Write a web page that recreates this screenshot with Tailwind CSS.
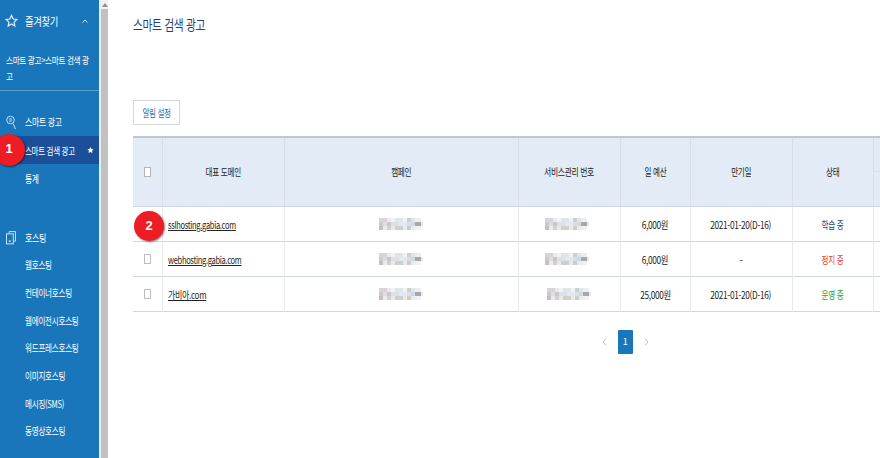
<!DOCTYPE html>
<html lang="ko">
  <head>
    <meta charset="UTF-8">
    <title>스마트 검색 광고</title>
    <script src="https://cdn.jsdelivr.net/npm/@tailwindcss/browser@4"></script>
  </head>
  <body class="bg-white overflow-hidden font-['Noto_Sans_CJK_KR','Noto_Sans',sans-serif]">
    <!-- mosaic used for the blurred values -->
    <svg class="hidden">
      <symbol id="mosaic" viewBox="0 0 44 12" shape-rendering="crispEdges">
        <path fill="#d9d4da" d="M0 0h8v4H0z"/><path fill="#ece9ea" d="M8 0h4v4H8z"/><path fill="#f2f2f0" d="M12 0h4v4h-4z"/><path fill="#dfe6ea" d="M16 0h8v4h-8z"/><path fill="#f1f1f0" d="M24 0h4v4h-4z"/><path fill="#cfcdcf" d="M28 0h4v4h-4z"/><path fill="#dfe5ea" d="M32 0h4v4h-4z"/><path fill="#ebedf0" d="M36 0h6v4h-6z"/>
        <path fill="#cfc8cf" d="M0 4h4v4H0z"/><path fill="#e0dde2" d="M4 4h4v4H4z"/><path fill="#c8c8cc" d="M8 4h4v4H8z"/><path fill="#dfe0e4" d="M12 4h8v4h-8z"/><path fill="#e4e8f2" d="M20 4h8v4h-8z"/><path fill="#d9dfe6" d="M28 4h4v4h-4z"/><path fill="#cdd8e0" d="M32 4h4v4h-4z"/><path fill="#a9a7ab" d="M36 4h6v4h-6z"/><path fill="#e8e8ee" d="M42 4h2v4h-2z"/>
        <path fill="#c4c0c2" d="M0 8h4v4H0z"/><path fill="#eceaea" d="M4 8h4v4H4z"/><path fill="#d4d0cc" d="M8 8h4v4H8z"/><path fill="#e6ebe8" d="M12 8h4v4h-4z"/><path fill="#cfcfcd" d="M16 8h8v4h-8z"/><path fill="#ece8e6" d="M24 8h4v4h-4z"/><path fill="#cdccc8" d="M28 8h4v4h-4z"/><path fill="#e6ecef" d="M32 8h4v4h-4z"/><path fill="#f2f0f4" d="M36 8h6v4h-6z"/>
      </symbol>
    </svg>
    <div class="relative flex w-[880px] h-[458px] overflow-hidden">
      <!-- sidebar -->
      <nav class="w-[99px] h-full shrink-0 bg-[#1a76bb] text-white text-[10px] tracking-[-0.4px]">
        <div class="flex items-center h-[42px] pl-[5px] pr-[11px]">
          <svg class="w-[13px] h-[14px] shrink-0" viewBox="0 0 14 15" fill="none" stroke="#e4eff8" stroke-width="1.3"><path d="M7 1.5l1.8 3.9 4 .5-3 2.8.8 4.2L7 10.8l-3.6 2.1.8-4.2-3-2.8 4-.5z"/></svg>
          <span class="ml-[7px] text-[11px] origin-left scale-x-[.85]">즐겨찾기</span>
          <svg class="ml-auto w-[6px] h-[4px]" viewBox="0 0 6 4" fill="none" stroke="#d5e6f3" stroke-width="1"><path d="M.5 3.5L3 1l2.5 2.5"/></svg>
        </div>
        <div class="h-[49px] border-b border-[#5a9fd3] pl-[6px] pt-[10px] leading-[16px] text-[9.5px]">
          <div class="origin-left scale-x-[.8] whitespace-nowrap">스마트 광고&gt;스마트 검색 광<br>고</div>
        </div>
        <div class="flex items-center h-[45px] pt-[16px] pl-[6px]">
          <svg class="w-[10px] h-[16px] shrink-0" viewBox="0 0 10 16" fill="none" stroke="#c7dcee" stroke-width="1"><circle cx="4.5" cy="6" r="3.8"/><path d="M7 9.5l2.5 5.5M3 5h3M3 7h3"/></svg>
          <span class="ml-[9px] origin-left scale-x-[.79]">스마트 광고</span>
        </div>
        <div class="flex items-center h-[28px] bg-[#1c4f99] pl-[25px] pr-[5px]">
          <span class="w-[50px] origin-left scale-x-[.75] whitespace-nowrap">스마트 검색 광고</span>
          <svg class="ml-auto w-[7px] h-[8px] shrink-0" viewBox="0 0 8 8" fill="#fff"><path d="M4 .5l1.1 2.3 2.4.3-1.7 1.7.4 2.7L4 6.3 1.800 7.500l.4-2.700L.5 3.100l2.400-.3z"/></svg>
        </div>
        <div class="flex items-center h-[28px] pl-[25px]"><span class="origin-left scale-x-[.78]">통계</span></div>
        <div class="flex items-center h-[27px] mt-[32px] pl-[6px]">
          <svg class="w-[10px] h-[15px] shrink-0" viewBox="0 0 11 15" fill="none" stroke="#dcebf6" stroke-width="1"><path d="M3.5 3V1h7v10.500h-2"/><rect x="0.500" y="3.500" width="7.500" height="11"/><circle cx="4.200" cy="11.500" r=".6" fill="#dcebf6"/></svg>
          <span class="ml-[9px] origin-left scale-x-[.8]">호스팅</span>
        </div>
        <ul class="ml-[25px] origin-left scale-x-[.76] whitespace-nowrap">
          <li class="flex items-center h-[27.7px]">웹호스팅</li>
          <li class="flex items-center h-[27.7px]">컨테이너호스팅</li>
          <li class="flex items-center h-[27.7px]">웹에이전시호스팅</li>
          <li class="flex items-center h-[27.7px]">워드프레스호스팅</li>
          <li class="flex items-center h-[27.7px]">이미지호스팅</li>
          <li class="flex items-center h-[27.7px]">메시징(SMS)</li>
          <li class="flex items-center h-[27.7px]">동영상호스팅</li>
        </ul>
      </nav>
      <!-- scrollbar -->
      <div class="w-[9px] h-full shrink-0 bg-[#c1c1c1] border-l-2 border-[#e9edf0] relative">
        <div class="absolute top-0 left-0 w-full h-[9px] bg-[#f1f1f1] flex items-center justify-center">
          <div class="w-0 h-0 border-x-[3px] border-x-transparent border-b-[4px] border-b-[#8f8f8f]"></div>
        </div>
      </div>
      <!-- main -->
      <main class="flex-1 pl-[25px] min-w-0">
        <h1 class="pt-[12px] h-[100px] text-[14px] leading-[24px] text-[#1f3f80] tracking-[-0.5px]"><span class="inline-block origin-left scale-x-[.77] whitespace-nowrap">스마트 검색 광고</span></h1>
        <button class="block w-[47px] h-[25px] border border-[#d5d9dd] text-[#2a6fb5] text-[10px] tracking-[-0.5px] bg-white"><span class="inline-block scale-x-[.76] whitespace-nowrap">알림 설정</span></button>
        <div class="w-[984px] mt-[11px] text-[10px] tracking-[-0.4px] text-[#222]">
          <table class="table-fixed border-collapse w-[984px] border-t-2 border-[#bcc7d2]">
            <colgroup>
              <col class="w-[29px]"><col class="w-[122px]"><col class="w-[234px]"><col class="w-[102px]"><col class="w-[70px]"><col class="w-[102px]"><col class="w-[81px]"><col>
            </colgroup>
            <thead class="bg-[#e3ecf6] text-center">
              <tr class="h-[69px] border-b border-[#cfd6de]">
                <th class="font-normal border-r border-[#d8dfe8]"><span class="block mx-auto w-[7px] h-[10px] border border-[#b5b5b5] bg-white"></span></th>
                <th class="font-normal border-r border-[#d8dfe8]"><span class="inline-block scale-x-[.76]">대표 도메인</span></th>
                <th class="font-normal border-r border-[#d8dfe8]"><span class="inline-block scale-x-[.76]">캠페인</span></th>
                <th class="font-normal border-r border-[#d8dfe8]"><span class="inline-block scale-x-[.78]">서비스관리 번호</span></th>
                <th class="font-normal border-r border-[#d8dfe8]"><span class="inline-block scale-x-[.76]">일 예산</span></th>
                <th class="font-normal border-r border-[#d8dfe8]"><span class="inline-block scale-x-[.76]">만기일</span></th>
                <th class="font-normal border-r border-[#d8dfe8]"><span class="inline-block scale-x-[.76]">상태</span></th>
                <th class="font-normal align-top"><div class="h-[34px] border-b border-[#d8dfe8]"></div></th>
              </tr>
            </thead>
            <tbody class="text-center">
              <tr class="h-[35px] border-b border-[#d0d6dd]">
                <td class="border-r border-[#e6eaee]"></td>
                <td class="border-r border-[#e6eaee] text-left pl-[5px] pt-[2px]"><a class="inline-block origin-left scale-x-[.75] whitespace-nowrap underline text-[#222]">sslhosting.gabia.com</a></td>
                <td class="border-r border-[#e6eaee]"><svg class="mx-auto w-[44px] h-[12px]"><use href="#mosaic"/></svg></td>
                <td class="border-r border-[#e6eaee]"><svg class="ml-[26px] w-[44px] h-[12px]"><use href="#mosaic"/></svg></td>
                <td class="border-r border-[#e6eaee] pt-[2px]"><span class="inline-block scale-x-[.83]">6,000원</span></td>
                <td class="border-r border-[#e6eaee] pt-[2px]"><span class="inline-block scale-x-[.83] whitespace-nowrap">2021-01-20(D-16)</span></td>
                <td class="border-r border-[#e6eaee] text-[#1c3f8f] pt-[2px]"><span class="inline-block scale-x-[.76]">학습 중</span></td>
                <td></td>
              </tr>
              <tr class="h-[35px] border-b border-[#d0d6dd]">
                <td class="border-r border-[#e6eaee]"><span class="block mx-auto w-[7px] h-[10px] border border-[#bdbdbd] bg-white"></span></td>
                <td class="border-r border-[#e6eaee] text-left pl-[5px] pt-[2px]"><a class="inline-block origin-left scale-x-[.75] whitespace-nowrap underline text-[#222]">webhosting.gabia.com</a></td>
                <td class="border-r border-[#e6eaee]"><svg class="mx-auto w-[44px] h-[12px]"><use href="#mosaic"/></svg></td>
                <td class="border-r border-[#e6eaee]"><svg class="ml-[26px] w-[44px] h-[12px]"><use href="#mosaic"/></svg></td>
                <td class="border-r border-[#e6eaee] pt-[2px]"><span class="inline-block scale-x-[.83]">6,000원</span></td>
                <td class="border-r border-[#e6eaee] pt-[2px]">-</td>
                <td class="border-r border-[#e6eaee] text-[#e0402a] pt-[2px]"><span class="inline-block scale-x-[.76]">정지 중</span></td>
                <td></td>
              </tr>
              <tr class="h-[35px] border-b border-[#d0d6dd]">
                <td class="border-r border-[#e6eaee]"><span class="block mx-auto w-[7px] h-[10px] border border-[#bdbdbd] bg-white"></span></td>
                <td class="border-r border-[#e6eaee] text-left pl-[5px] pt-[2px]"><a class="inline-block origin-left scale-x-[.8] whitespace-nowrap underline text-[#222]">가비아.com</a></td>
                <td class="border-r border-[#e6eaee]"><svg class="mx-auto w-[44px] h-[12px]"><use href="#mosaic"/></svg></td>
                <td class="border-r border-[#e6eaee]"><svg class="ml-[28px] w-[44px] h-[12px]"><use href="#mosaic"/></svg></td>
                <td class="border-r border-[#e6eaee] pt-[2px]"><span class="inline-block scale-x-[.83]">25,000원</span></td>
                <td class="border-r border-[#e6eaee] pt-[2px]"><span class="inline-block scale-x-[.83] whitespace-nowrap">2021-01-20(D-16)</span></td>
                <td class="border-r border-[#e6eaee] text-[#1f9a2e] pt-[2px]"><span class="inline-block scale-x-[.76]">운영 중</span></td>
                <td></td>
              </tr>
            </tbody>
          </table>
          <div class="flex items-center justify-center gap-[11px] mt-[18px] text-[#b8c0c8]">
            <svg class="w-[5px] h-[8px]" viewBox="0 0 5 8" fill="none" stroke="#b8c0c8"><path d="M4 .5L1 4l3 3.500"/></svg>
            <span class="flex items-center justify-center w-[15px] h-[24px] bg-[#1a76bb] text-white text-[9px] rounded-[1px]">1</span>
            <svg class="w-[5px] h-[8px]" viewBox="0 0 5 8" fill="none" stroke="#b8c0c8"><path d="M1 .5L4 4 1 7.500"/></svg>
          </div>
        </div>
      </main>
      <!-- callout badges -->
      <div class="absolute left-[-7px] top-[134px] w-[32px] h-[32px] rounded-full bg-[#ee1c25] text-white font-bold text-[13px] flex items-center justify-center pb-[3px] shadow-[1px_1px_2px_rgba(0,0,0,0.5)] font-['Liberation_Sans',sans-serif]">1</div>
      <div class="absolute left-[134px] top-[211px] w-[30px] h-[30px] rounded-full bg-[#ee1c25] text-white font-bold text-[13px] flex items-center justify-center shadow-[1px_1px_2px_rgba(0,0,0,0.5)] font-['Liberation_Sans',sans-serif]">2</div>
    </div>
  </body>
</html>
